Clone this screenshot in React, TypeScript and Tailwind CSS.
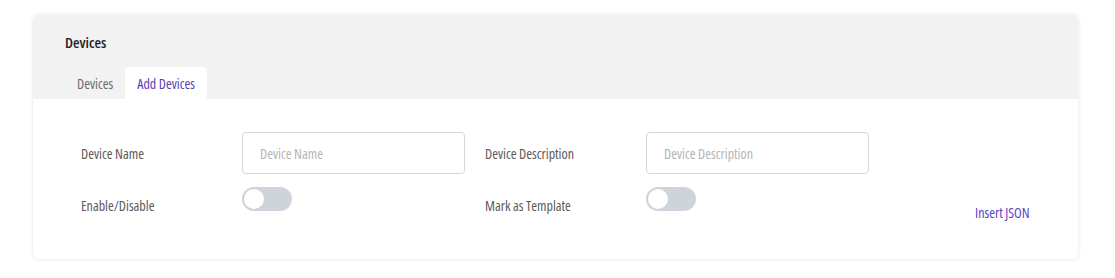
import React from "react";

const font = { fontFamily: '"Open Sans", Roboto, sans-serif' };

function Toggle() {
  return (
    <div className="flex h-[24px] w-[50px] items-center rounded-full bg-[#ced4da] px-[2px]">
      <div className="h-[20px] w-[20px] rounded-full bg-white" />
    </div>
  );
}

function TextInput({ placeholder }: { placeholder: string }) {
  return (
    <input
      placeholder={placeholder}
      className="h-[42px] w-[223px] rounded-[4px] border border-[#d6d6d6] bg-white px-[17px] text-[14px] font-stretch-condensed text-[#444] outline-none placeholder:text-[#b5b5b5]"
      style={font}
    />
  );
}

export default function App() {
  return (
    <div className="min-h-screen bg-white pt-[15px] font-stretch-condensed" style={font}>
      <div className="ml-[33px] w-[1045px] overflow-hidden rounded-[6px] bg-white shadow-[0_0_4px_rgba(0,0,0,0.12)]">
        <div className="bg-[#f2f2f2] pl-[32px] pt-[17px]">
          <div className="text-[15px] leading-[20px] font-semibold text-[#222]">Devices</div>
          <div className="mt-[15px] flex">
            <div className="flex h-[32px] items-center px-[12px] text-[14px] text-[#6b6b6b]">Devices</div>
            <div className="flex h-[32px] items-center rounded-t-[4px] bg-white px-[12px] text-[14px] text-[#5b3fb3]">
              Add Devices
            </div>
          </div>
        </div>
        <div className="pb-[36px] pl-[48px] pt-[33px]">
          <div className="flex items-center">
            <div className="w-[161px] text-[14px] text-[#5a5a5a]">Device Name</div>
            <TextInput placeholder="Device Name" />
            <div className="ml-[20px] w-[161px] text-[14px] text-[#5a5a5a]">Device Description</div>
            <TextInput placeholder="Device Description" />
          </div>
          <div className="mt-[13px] flex items-start">
            <div className="mt-[9px] w-[161px] text-[14px] leading-[20px] text-[#5a5a5a]">Enable/Disable</div>
            <div className="w-[223px]">
              <Toggle />
            </div>
            <div className="ml-[20px] mt-[9px] w-[161px] text-[14px] leading-[20px] text-[#5a5a5a]">Mark as Template</div>
            <div className="w-[223px]">
              <Toggle />
            </div>
            <div className="ml-[106px] mt-[16px] text-[14px] leading-[20px] text-[#5b3fc4]">Insert JSON</div>
          </div>
        </div>
      </div>
    </div>
  );
}
